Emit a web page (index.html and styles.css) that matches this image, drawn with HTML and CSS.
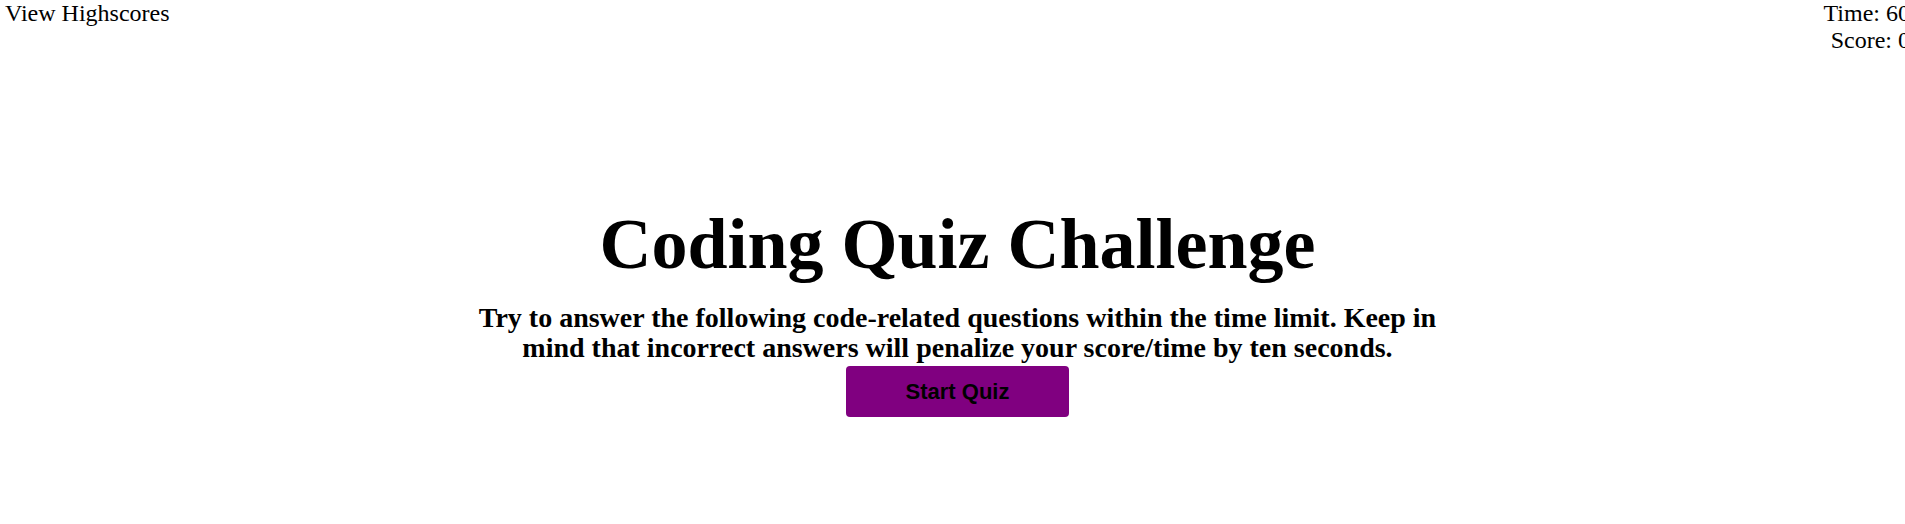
FILE: index.html
```html
<!DOCTYPE html>
<html lang="en">
<head>
<meta charset="utf-8">
<title>Coding Quiz Challenge</title>
<link rel="stylesheet" href="styles.css">
</head>
<body>
<header class="topbar">
  <a class="highscores">View Highscores</a>
  <div class="stats">
    <div class="stat">Time: 60</div>
    <div class="stat">Score: 0</div>
  </div>
</header>
<main class="intro">
  <h1 class="title">Coding Quiz Challenge</h1>
  <p class="lead">Try to answer the following code-related questions within the time limit. Keep in mind that incorrect answers will penalize your score/time by ten seconds.</p>
  <button class="start-btn" type="button">Start Quiz</button>
</main>
</body>
</html>
```
FILE: styles.css
```css
html, body {
  margin: 0;
  overflow-x: hidden;
}

body {
  font-family: "Liberation Serif", "Times New Roman", serif;
  color: #000;
  background: #fff;
}

.topbar {
  display: flex;
  justify-content: space-between;
  align-items: flex-start;
  width: 100%;
  padding: 0 5px;
  font-size: 24px;
}

.highscores {
  color: #000;
}

.stats {
  text-align: right;
}

.intro {
  display: flex;
  flex-direction: column;
  align-items: center;
  width: 100%;
  padding: 0 5px;
  margin-top: 149px;
}

.title {
  margin: 0;
  font-size: 72px;
  font-weight: bold;
}

.lead {
  width: 985px;
  margin: 17px 0 3px;
  font-size: 28px;
  line-height: 30px;
  font-weight: bold;
  text-align: center;
}

.start-btn {
  font-family: "Liberation Sans", Arial, sans-serif;
  font-size: 22px;
  font-weight: bold;
  line-height: 25px;
  color: #000;
  background: #800080;
  border: none;
  border-radius: 4px;
  padding: 13px 60px;
  cursor: pointer;
}
```
